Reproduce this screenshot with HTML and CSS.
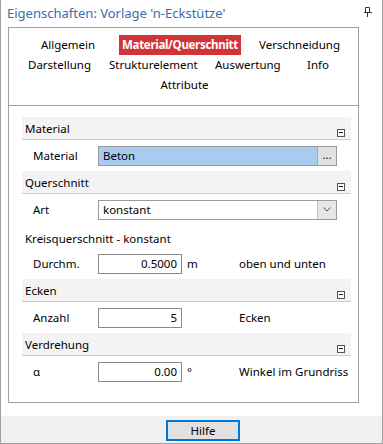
FILE: index.html
```html
<!DOCTYPE html>
<html lang="de">
<head>
  <meta charset="UTF-8" />
  <title>Eigenschaften</title>
  <link rel="stylesheet" href="styles.css">
</head>
<body>
  <div class="window">
    <div class="titlebar">
      <span class="title">Eigenschaften: Vorlage 'n-Eckstütze'</span>
      <svg class="pin" width="8" height="10" viewBox="0 0 8 10">
        <path d="M1.5 0.5h4v5h-4z" fill="none" stroke="#333" />
        <path d="M0 5.5h8" stroke="#333" />
        <path d="M3.5 6v4" stroke="#333" />
      </svg>
    </div>

    <div class="panel">
      <div class="tabs">
        <div class="tab-row row1">
          <span class="tab" style="width:78px">Allgemein</span>
          <span class="tab active">Material/Querschnitt</span>
          <span class="tab">Verschneidung</span>
        </div>
        <div class="tab-row row2">
          <span class="tab" style="width:81px">Darstellung</span>
          <span class="tab" style="width:106px">Strukturelement</span>
          <span class="tab" style="width:92px">Auswertung</span>
          <span class="tab">Info</span>
        </div>
        <div class="tab-row row3">
          <span class="tab">Attribute</span>
        </div>
      </div>

      <div class="content">
        <div class="group-head"><span>Material</span><i class="collapse"></i></div>
        <div class="field-row">
          <label>Material</label>
          <div class="picker">
            <span class="picker-value">Beton</span>
            <span class="picker-btn">...</span>
          </div>
        </div>

        <div class="group-head"><span>Querschnitt</span><i class="collapse"></i></div>
        <div class="field-row">
          <label>Art</label>
          <div class="combo">
            <span class="combo-value">konstant</span>
            <span class="combo-btn">
              <svg width="8" height="5" viewBox="0 0 8 5"><path d="M0.5 0.5l3.5 3.5l3.5-3.5" fill="none" stroke="#555" /></svg>
            </span>
          </div>
        </div>

        <div class="subtitle">Kreisquerschnitt - konstant</div>
        <div class="field-row">
          <label>Durchm.</label>
          <span class="textbox">0.5000</span>
          <span class="unit">m</span>
          <span class="note">oben und unten</span>
        </div>

        <div class="group-head"><span>Ecken</span><i class="collapse"></i></div>
        <div class="field-row">
          <label>Anzahl</label>
          <span class="textbox">5</span>
          <span class="unit"></span>
          <span class="note">Ecken</span>
        </div>

        <div class="group-head"><span>Verdrehung</span><i class="collapse"></i></div>
        <div class="field-row">
          <label>α</label>
          <span class="textbox">0.00</span>
          <span class="unit">°</span>
          <span class="note">Winkel im Grundriss</span>
        </div>
      </div>
    </div>

    <div class="footer">
      <button class="help">Hilfe</button>
    </div>
  </div>
</body>
</html>
```

FILE: styles.css
```css
body {
  margin: 0;
  font-family: "Noto Sans", "Open Sans", sans-serif;
  font-size: 11.5px;
  color: #000;
  background: #fff;
}
.window {
  width: 383px;
  height: 444px;
  box-sizing: border-box;
  border: 1px solid #a0a0a0;
  border-top: none;
  display: flex;
  flex-direction: column;
}
.titlebar {
  height: 27px;
  display: flex;
  align-items: center;
  justify-content: space-between;
  padding: 0 10px 1px 6px;
  box-sizing: border-box;
}
.title {
  font-size: 13px;
  color: #3a6db3;
}
.pin {
  margin-top: -3px;
}
.panel {
  width: 351px;
  height: 376px;
  margin-left: 7px;
  box-sizing: border-box;
  border: 1px solid #a0a0a0;
}
.tabs {
  padding: 7px 0 10px;
  border-bottom: 1px solid #a0a0a0;
}
.tab-row {
  display: flex;
  height: 20px;
  line-height: 20px;
  white-space: nowrap;
}
.row1 { padding-left: 32px; }
.row2 { padding-left: 19px; }
.row3 { justify-content: center; padding-left: 2px; }
.tab.active {
  width: 122px;
  margin-right: 18px;
  text-align: center;
  background: #d13438;
  color: #fff;
  font-weight: bold;
  letter-spacing: -0.3px;
}
.content {
  padding: 11px 7px 0 13px;
}
.group-head {
  height: 23px;
  box-sizing: border-box;
  background: #f3f3f3;
  border-bottom: 1px solid #cdcdcd;
  display: flex;
  align-items: center;
  justify-content: space-between;
  padding: 0 6px 0 3px;
}
.collapse {
  width: 8px;
  height: 8px;
  box-sizing: border-box;
  border: 1px solid #555;
  background: #fff;
  align-self: flex-end;
  margin-bottom: 2px;
  position: relative;
}
.collapse::after {
  content: "";
  position: absolute;
  left: 1px;
  right: 1px;
  top: 2px;
  height: 1px;
  background: #222;
}
.field-row {
  height: 31px;
  display: flex;
  align-items: center;
  padding-left: 11px;
  white-space: nowrap;
}
.field-row label {
  width: 65px;
}
.picker,
.combo {
  width: 239px;
  height: 20px;
  box-sizing: border-box;
  border: 1px solid #9a9a9a;
  display: flex;
}
.picker-value {
  flex: 1;
  background: #a9cbf0;
  padding-left: 4px;
  line-height: 18px;
}
.picker-btn {
  width: 18px;
  background: #e1e1e1;
  border-left: 1px solid #adadad;
  text-align: center;
  line-height: 16px;
  font-size: 11px;
}
.combo-value {
  flex: 1;
  padding-left: 4px;
  line-height: 18px;
}
.combo-btn {
  width: 18px;
  background: #e6e6e6;
  border-left: 1px solid #c4c4c4;
  display: flex;
  align-items: center;
  justify-content: center;
}
.subtitle {
  height: 23px;
  box-sizing: border-box;
  padding: 5px 0 0 3px;
  line-height: 18px;
}
.textbox {
  width: 84px;
  height: 20px;
  box-sizing: border-box;
  border: 1px solid #8a8a8a;
  text-align: right;
  padding-right: 4px;
  line-height: 18px;
}
.unit {
  width: 57px;
  box-sizing: border-box;
  padding-left: 5px;
}
.footer {
  margin-top: 13px;
  height: 27px;
  background: #f0f0f0;
  display: flex;
  justify-content: center;
  align-items: flex-start;
  padding-top: 4px;
  box-sizing: border-box;
}
.help {
  width: 74px;
  height: 21px;
  margin-left: 23px;
  box-sizing: border-box;
  border: 2px solid #0078d7;
  background: #e1e1e1;
  font-family: inherit;
  font-size: 11.5px;
  padding: 0;
  color: #000;
}
```
